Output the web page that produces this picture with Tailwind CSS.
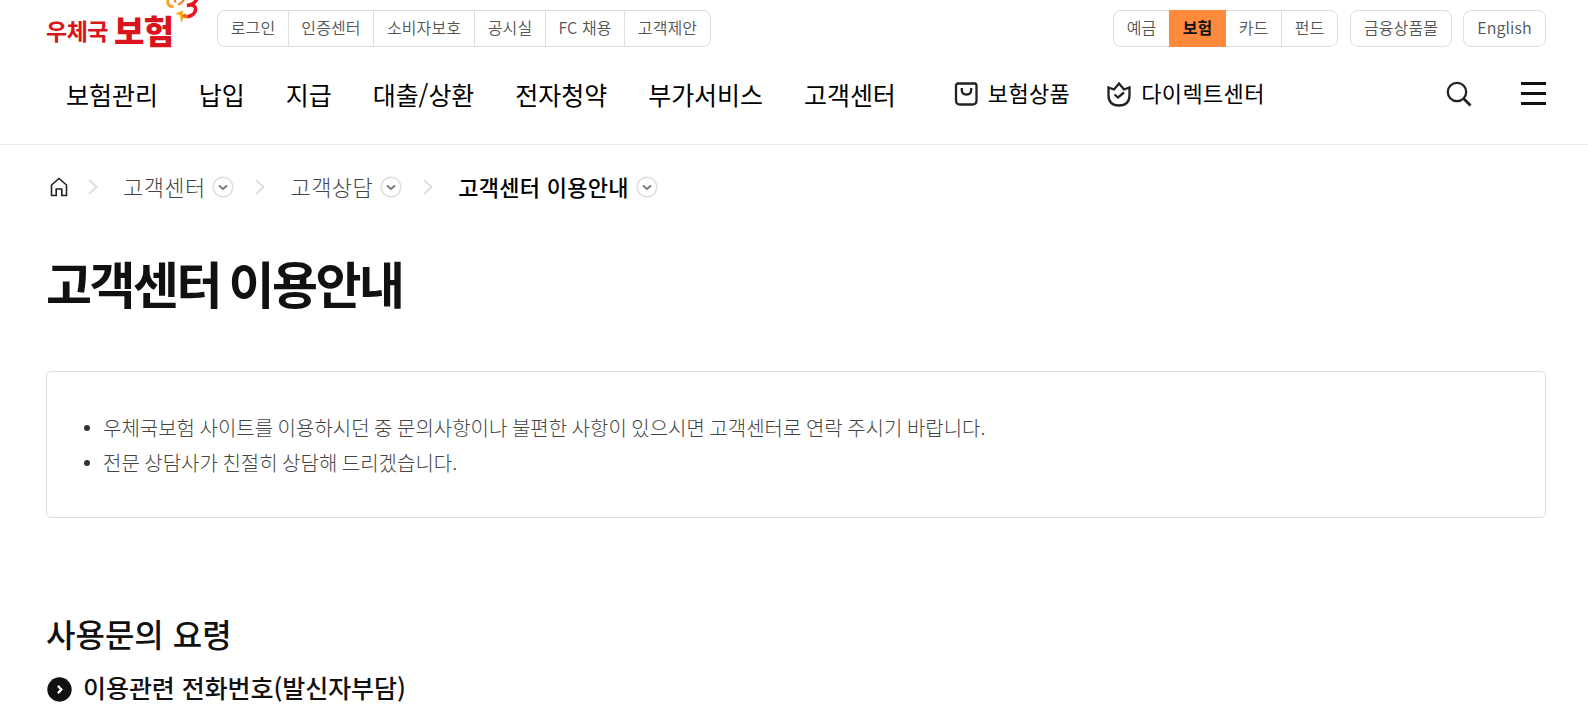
<!DOCTYPE html>
<html lang="ko">
<head>
  <meta charset="UTF-8">
  <meta name="viewport" content="width=device-width, initial-scale=1.0">
  <title>고객센터 이용안내 | 우체국보험</title>
  <script src="https://cdn.jsdelivr.net/npm/@tailwindcss/browser@4"></script>
  <style>
    body { font-family: 'Noto Sans CJK KR', sans-serif; }
  </style>
</head>
<body class="bg-white text-[#111] overflow-hidden">

<!-- Header -->
<header class="h-[145px] border-b border-[#ebebeb] pl-[46px] pr-[42px]">
  <div class="flex h-[47px] items-end">
    <a href="#" class="relative flex h-[47px] w-[171px] shrink-0 items-end whitespace-nowrap text-[#d9141c]">
      <span class="text-[23px] leading-[33px] font-bold tracking-[-0.5px]">우체국</span>
      <span class="ml-[6px] text-[33px] leading-[34px] font-black tracking-[-0.5px]">보험</span>
      <svg class="absolute left-[119px] top-0" width="34" height="24" viewBox="0 0 34 24" fill="none">
        <path d="M3 -1C2 4 4 7 8.500 6.500" stroke="#f9a51a" stroke-width="3"/>
        <path d="M9.500 -1L10.500 2.500M13 4.500L15.500 3.500L19 0" stroke="#f0801c" stroke-width="2"/>
        <path d="M11.500 13.500L18 11L16.800 14.500L22 16.500L18.500 17L16.500 21.500L15.500 15Z" fill="#f7a400" stroke="#f7a400" stroke-width="0.800"/>
        <path d="M18.500 14.500C20 17 24 17.500 27 15" stroke="#f2661b" stroke-width="3.500"/>
        <path d="M23 16.500C28 16 31 12 30.500 8.500C30 5 26.500 4.500 22 5.500C27 5 30 3 32 -1" stroke="#e8141f" stroke-width="3.500"/>
      </svg>
    </a>
    <ul class="flex h-[37px] divide-x divide-[#ddd] rounded-lg border border-[#ddd] text-[16px] leading-[33px] tracking-[0.1px] text-[#555] font-[350] text-center whitespace-nowrap">
      <li class="w-[71px]"><a href="#">로그인</a></li>
      <li class="w-[85px]"><a href="#">인증센터</a></li>
      <li class="w-[101px]"><a href="#">소비자보호</a></li>
      <li class="w-[71px]"><a href="#">공시실</a></li>
      <li class="w-[79px]"><a href="#">FC 채용</a></li>
      <li class="w-[85px]"><a href="#">고객제안</a></li>
    </ul>
    <div class="ml-auto flex h-[37px] text-[16px] leading-[33px] tracking-[0.1px] text-[#555] font-[350] text-center whitespace-nowrap">
      <ul class="flex rounded-lg border border-[#ddd]">
        <li class="w-[55px]"><a href="#">예금</a></li>
        <li class="-my-px h-[37px] w-[57px] bg-[#ff8a3c] pt-px font-bold text-[#111]"><a href="#">보험</a></li>
        <li class="w-[56px] border-r border-[#ddd]"><a href="#">카드</a></li>
        <li class="w-[55px]"><a href="#">펀드</a></li>
      </ul>
      <a href="#" class="ml-[12px] w-[102px] rounded-lg border border-[#ddd]">금융상품몰</a>
      <a href="#" class="ml-[11px] w-[83px] rounded-lg border border-[#ddd]">English</a>
    </div>
  </div>

  <div class="flex h-[94px] items-center pl-[20px] whitespace-nowrap">
    <nav class="flex gap-[41px] text-[25px] leading-[36px] tracking-[-0.04px] font-normal text-black">
      <a href="#">보험관리</a>
      <a href="#">납입</a>
      <a href="#">지급</a>
      <a href="#">대출/상환</a>
      <a href="#">전자청약</a>
      <a href="#">부가서비스</a>
      <a href="#">고객센터</a>
    </nav>
    <a href="#" class="ml-[58px] flex items-center gap-[9px] text-[22px] leading-[32px] tracking-[0.35px] font-normal text-black">
      <svg width="25" height="26" viewBox="0 0 25 26" fill="none" stroke="#222" stroke-width="2.300">
        <path d="M3.500 2.500H21.500L22.500 4V19.500Q22.500 23.500 18.500 23.500H6Q2 23.500 2 19.500V4Z"/>
        <path d="M7.800 7V9Q7.800 13.500 12.500 13.500Q17.200 13.500 17.200 9V7"/>
      </svg>
      <span class="-mt-1">보험상품</span>
    </a>
    <a href="#" class="ml-[36px] flex items-center gap-[9px] text-[22px] leading-[32px] tracking-[0.35px] font-normal text-black">
      <svg width="26" height="26" viewBox="0 0 26 26" fill="none" stroke="#222" stroke-width="2.300">
        <path d="M2.500 6.500L8 8.500L13 2.500L18 8.500L23.500 6.500V14Q23.500 24.500 13 24.500Q2.500 24.500 2.500 14Z"/>
        <path d="M8.500 13.500L12 16.500L18 11.500"/>
      </svg>
      <span class="-mt-1">다이렉트센터</span>
    </a>
    <button class="ml-auto" aria-label="검색">
      <svg width="26" height="26" viewBox="0 0 26 26" fill="none" stroke="#222" stroke-width="2.300">
        <circle cx="11" cy="11" r="9.200"/>
        <path d="M17.500 17.500L24.500 24.500" stroke-width="2.800"/>
      </svg>
    </button>
    <button class="-mt-px ml-[49px] flex w-[25px] flex-col gap-[7px]" aria-label="전체메뉴">
      <span class="h-[3px] w-full bg-[#111]"></span>
      <span class="h-[3px] w-full bg-[#111]"></span>
      <span class="h-[3px] w-full bg-[#111]"></span>
    </button>
  </div>
</header>

<main class="pl-[46px] pr-[42px]">
  <!-- Breadcrumb -->
  <div class="flex h-[84px] items-center pl-[4px] text-[22px] leading-[32px] tracking-[0.4px] whitespace-nowrap">
    <svg width="18" height="20" viewBox="0 0 18 20" fill="none" stroke="#222" stroke-width="1.600">
      <path d="M1.500 8L9 1.500L16.500 8V18.500H11.800V12H6.200V18.500H1.500Z"/>
    </svg>
    <svg class="ml-[20px]" width="10" height="16" viewBox="0 0 10 16" fill="none" stroke="#ddd" stroke-width="1.800"><path d="M1 1L8.500 8L1 15"/></svg>
    <a href="#" class="-mt-[3px] ml-[25px] font-light text-[#444]">고객센터</a>
    <svg class="-mt-px ml-[6px]" width="22" height="22" viewBox="0 0 22 22" fill="none"><circle cx="11" cy="11" r="9.800" stroke="#ddd" stroke-width="1.500"/><path d="M7 9.500L11 13L15 9.500" stroke="#777" stroke-width="1.800"/></svg>
    <svg class="ml-[21px]" width="10" height="16" viewBox="0 0 10 16" fill="none" stroke="#ddd" stroke-width="1.800"><path d="M1 1L8.500 8L1 15"/></svg>
    <a href="#" class="-mt-[3px] ml-[26px] font-light text-[#444]">고객상담</a>
    <svg class="-mt-px ml-[7px]" width="22" height="22" viewBox="0 0 22 22" fill="none"><circle cx="11" cy="11" r="9.800" stroke="#ddd" stroke-width="1.500"/><path d="M7 9.500L11 13L15 9.500" stroke="#777" stroke-width="1.800"/></svg>
    <svg class="ml-[21px]" width="10" height="16" viewBox="0 0 10 16" fill="none" stroke="#ddd" stroke-width="1.800"><path d="M1 1L8.500 8L1 15"/></svg>
    <a href="#" class="-mt-[3px] ml-[25px] font-medium tracking-[0.3px] text-black">고객센터 이용안내</a>
    <svg class="-mt-px ml-[7px]" width="22" height="22" viewBox="0 0 22 22" fill="none"><circle cx="11" cy="11" r="9.800" stroke="#ddd" stroke-width="1.500"/><path d="M7 9.500L11 13L15 9.500" stroke="#777" stroke-width="1.800"/></svg>
  </div>

  <h1 class="mt-[17px] text-[50px] leading-[72px] font-bold tracking-[-2.5px] [word-spacing:-3px]">고객센터 이용안내</h1>

  <!-- Notice -->
  <ul class="mt-[53px] h-[147px] rounded-[5px] border border-[#ddd] pl-[37px] pt-[38px] text-[20px] leading-[35px] font-light text-[#444] [word-spacing:-1.100px]">
    <li class="flex h-[35px] items-center gap-[13px]"><span class="size-[6px] rounded-full bg-[#333]"></span><span class="-mt-px">우체국보험 사이트를 이용하시던 중 문의사항이나 불편한 사항이 있으시면 고객센터로 연락 주시기 바랍니다.</span></li>
    <li class="flex h-[35px] items-center gap-[13px]"><span class="size-[6px] rounded-full bg-[#333]"></span><span class="-mt-px">전문 상담사가 친절히 상담해 드리겠습니다.</span></li>
  </ul>

  <h2 class="mt-[91px] text-[32px] leading-[48px] font-medium">사용문의 요령</h2>
  <h3 class="mt-[13px] flex items-center gap-[11px] text-[25px] leading-[36px] font-medium tracking-[-0.06px]">
    <svg class="mt-[3px] ml-px" width="25" height="25" viewBox="0 0 24 24" fill="none"><circle cx="12" cy="12" r="11.700" fill="#111"/><path d="M10.500 8.500L13.800 12L10.500 15.500" stroke="#fff" stroke-width="2.200"/></svg>
    <span class="-mt-px">이용관련 전화번호(발신자부담)</span>
  </h3>
</main>
</body>
</html>
